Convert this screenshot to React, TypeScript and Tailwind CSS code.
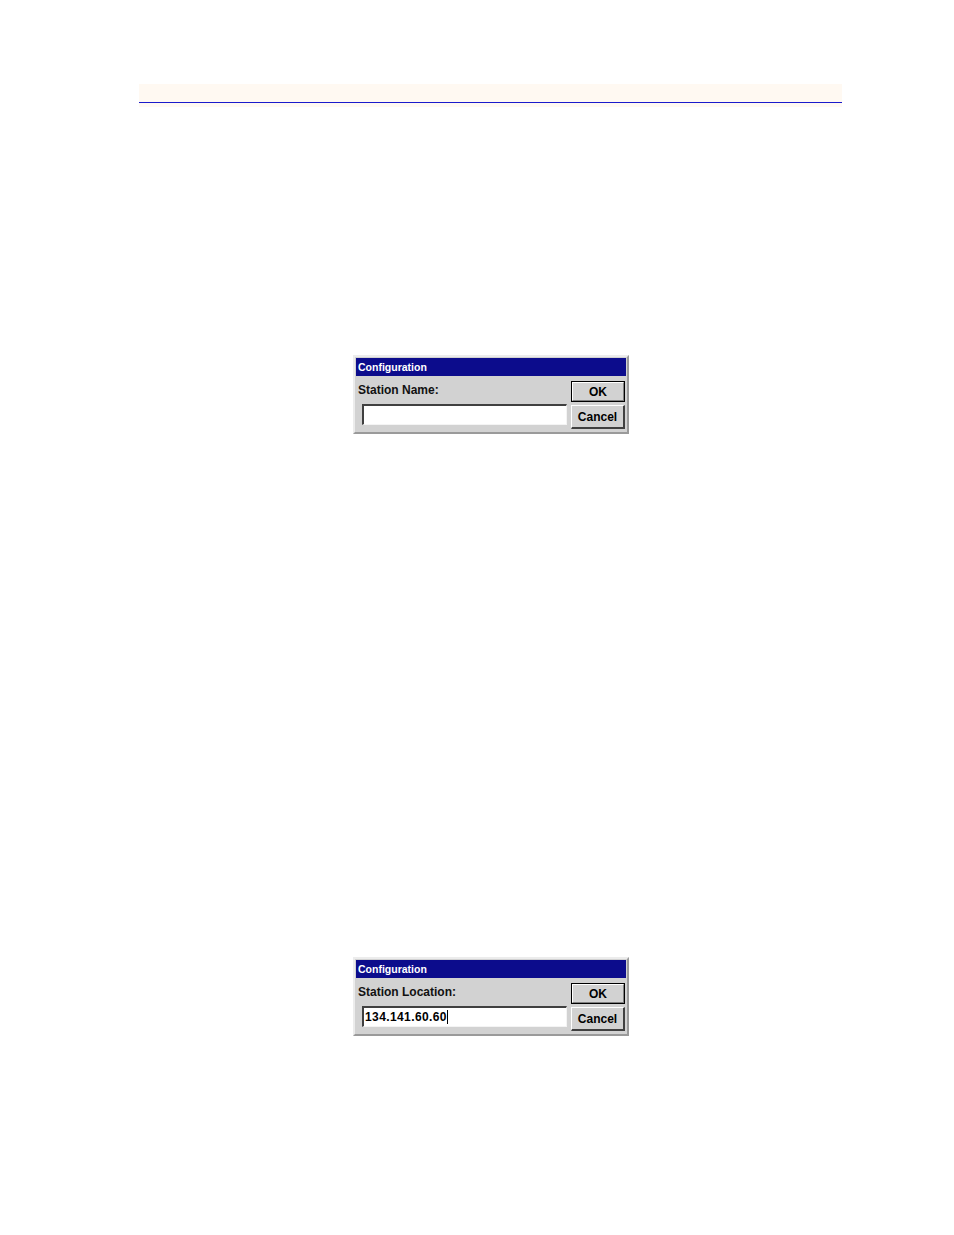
import React from "react";

const font = { fontFamily: '"Liberation Sans", Arial, sans-serif' };

function Dialog({ label, value, cursor }: { label: string; value: string; cursor?: boolean }) {
  return (
    <div
      className="w-[276px] h-[79px] bg-[#d2d2d2] border-t-2 border-l-2 border-b-2 border-r-2 border-t-[#ececec] border-l-[#ececec] border-b-[#9a9a9a] border-r-[#9a9a9a] pt-[1px] px-[1px] flex flex-col"
      style={font}
    >
      <div className="h-[18px] bg-[#0c0c8c] text-white text-[10.5px] font-bold leading-[18px] pl-[2px]">
        Configuration
      </div>
      <div className="flex flex-row flex-1">
        <div className="flex flex-col w-[214px]">
          <div className="text-[12px] font-bold text-[#111] leading-[14px] mt-[7px] pl-[2px]">{label}</div>
          <div className="ml-[6px] mt-[7px] w-[205px] h-[21px] bg-white border-t-2 border-l-2 border-t-[#404040] border-l-[#404040] border-b border-r border-b-[#f4f4f4] border-r-[#f4f4f4] flex items-center pl-[1px]">
            <span className="text-[12px] font-bold text-black leading-[14px] tracking-[0.4px]">{value}</span>
            {cursor && <span className="w-[1px] h-[14px] bg-black"></span>}
          </div>
        </div>
        <div className="flex flex-col ml-[1px] mt-[5px]">
          <div className="w-[54px] h-[21px] border border-black bg-[#d2d2d2]">
            <div className="w-full h-full border-t border-l border-t-white border-l-white border-b border-r border-b-[#808080] border-r-[#808080] flex items-center justify-center text-[12px] font-bold text-black pt-[1px]">
              OK
            </div>
          </div>
          <div className="mt-[3px] w-[54px] h-[24px] border-t border-l border-t-white border-l-white border-b-2 border-r-2 border-b-[#404040] border-r-[#404040] flex items-center justify-center text-[12px] font-bold text-black">
            Cancel
          </div>
        </div>
      </div>
    </div>
  );
}

export default function App() {
  return (
    <div className="w-[954px] h-[1235px] bg-white pt-[84px]">
      <div className="ml-[139px] w-[703px] h-[23px] bg-[#fff9f2] flex flex-col">
        <div className="h-[18px]"></div>
        <div className="h-[1px] bg-[#1a1acc]"></div>
      </div>
      <div className="ml-[353px] mt-[248px]">
        <Dialog label="Station Name:" value="" />
      </div>
      <div className="ml-[353px] mt-[523px]">
        <Dialog label="Station Location:" value="134.141.60.60" cursor />
      </div>
    </div>
  );
}
